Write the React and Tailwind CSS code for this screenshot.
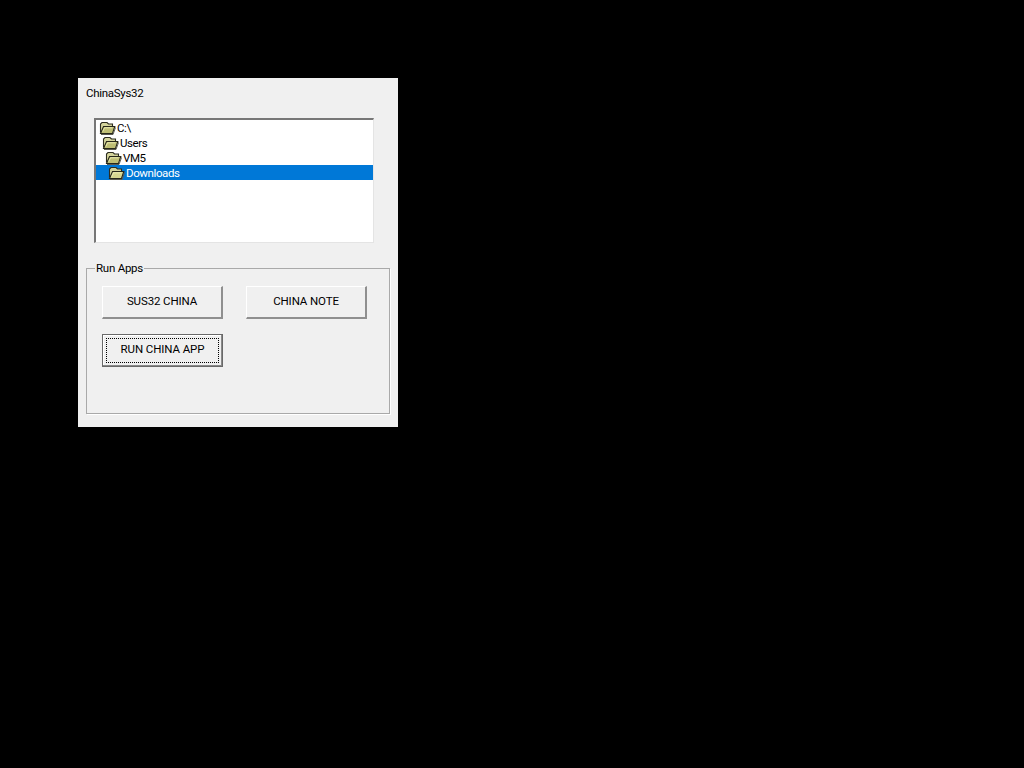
const font = { fontFamily: 'Roboto, "Liberation Sans", Arial, sans-serif' };

function Folder({ selected }) {
  return (
    <svg width="17" height="14" viewBox="0 0 17 14" className="shrink-0 block">
      <path d="M1.5 11.5 L1.5 3 L3 1.5 L8 1.5 L9.5 3 L13.5 3 L13.5 5" fill="#d4d49c" stroke="#2c2c20" strokeWidth="1.1" />
      <path d="M1.5 12.5 L4.5 5.5 L15.8 5.5 L13.5 12.5 Z" fill={selected ? "#d6d690" : "#bebe74"} stroke="#26261a" strokeWidth="1.1" />
      <path d="M3.8 10.5 L5.5 6.8 L13.5 6.8" fill="none" stroke="#eeeeb8" strokeWidth="0.9" />
      <path d="M2 13.5 L14 13.5 L16.5 6.5" fill="none" stroke="#5a5a50" strokeWidth="1" />
    </svg>
  );
}

function Row({ label, indent, selected }) {
  return (
    <div className={`h-[15px] flex items-center ${selected ? "bg-[#0078d7] text-white" : "text-black"}`}>
      <div className={`flex items-center ${indent}`}>
        <Folder selected={selected} />
        <span className="ml-px text-[11.5px] leading-[15px] tracking-[-0.4px] translate-y-px">{label}</span>
      </div>
    </div>
  );
}

function Btn({ children, focused }) {
  if (focused) {
    return (
      <button className="w-[121px] h-[33px] bg-[#f0f0f0] border border-[#696969] shadow-[inset_-1px_-1px_0_#8a8a8a,inset_1px_1px_0_#ffffff] p-[3px] text-[11.5px] tracking-[-0.1px] text-black">
        <span className="flex h-full w-full items-center justify-center border border-dotted border-black pb-px">{children}</span>
      </button>
    );
  }
  return (
    <button className="w-[121px] h-[33px] bg-[#f0f0f0] border-t border-l border-t-white border-l-white border-r-2 border-b-2 border-r-[#8f8f8f] border-b-[#8f8f8f] flex items-center justify-center text-[11.5px] tracking-[-0.12px] text-black">
      {children}
    </button>
  );
}

export default function App() {
  return (
    <div className="min-h-[768px] w-[1024px] bg-black pt-[78px] pl-[78px]" style={font}>
      <div className="w-[320px] h-[349px] bg-[#f0f0f0] flex flex-col pl-2 pt-2">
        <div className="text-[11.5px] leading-[15px] tracking-[-0.3px] text-black">ChinaSys32</div>
        <div className="ml-2 mt-[17px] w-[280px] h-[125px] bg-white border-2 border-r border-b border-t-[#777777] border-l-[#777777] border-r-[#e4e4e4] border-b-[#e4e4e4]">
          <Row label="C:\" indent="pl-[3px]" />
          <Row label="Users" indent="pl-[6px]" />
          <Row label="VM5" indent="pl-[9px]" />
          <Row label="Downloads" indent="pl-3" selected />
        </div>
        <fieldset className="mt-[19px] w-[304px] h-[152px] border border-[#a9a9a9] shadow-[1px_1px_0_#ffffff] pl-[15px] pt-[11px]">
          <legend className="ml-[-7px] px-px text-[11.5px] leading-[13px] tracking-[-0.25px] text-black">Run Apps</legend>
          <div className="grid grid-cols-[121px_121px] gap-x-[23px] gap-y-[15px]">
            <Btn>SUS32 CHINA</Btn>
            <Btn>CHINA NOTE</Btn>
            <Btn focused>RUN CHINA APP</Btn>
          </div>
        </fieldset>
      </div>
    </div>
  );
}
